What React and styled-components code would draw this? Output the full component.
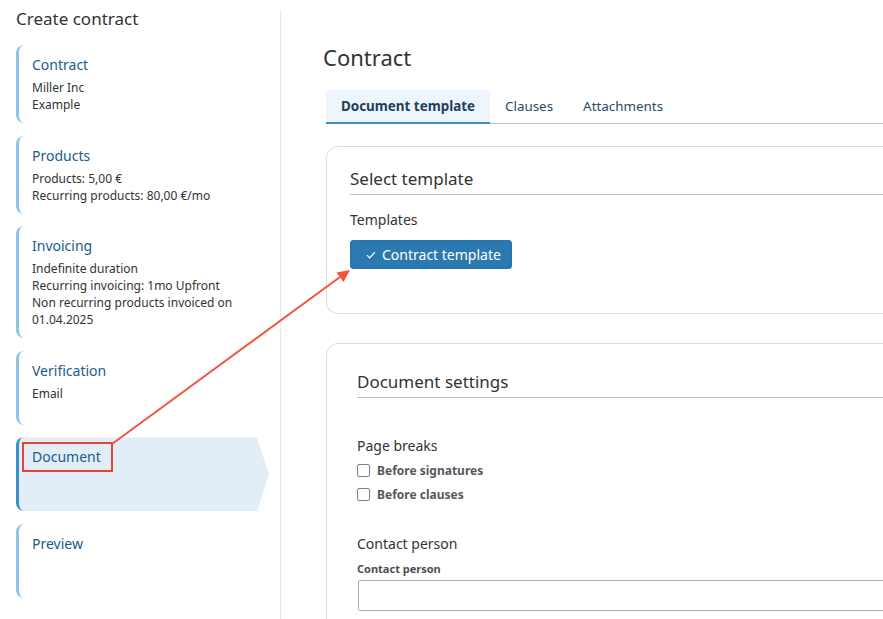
import styled, { createGlobalStyle } from 'styled-components'

const GlobalStyle = createGlobalStyle`
  html, body {
    margin: 0;
    padding: 0;
    background: #ffffff;
  }
  body {
    font-family: "Noto Sans", "Open Sans", sans-serif;
    color: #333333;
  }
`;

const Page = styled.div`
  position: relative;
  width: 883px;
  height: 619px;
  overflow: hidden;
  display: flex;
  padding-top: 10px;
  box-sizing: border-box;
`;

const Sidebar = styled.aside`
  width: 281px;
  flex-shrink: 0;
  box-sizing: border-box;
  padding: 0 11px 0 16px;
  border-right: 1px solid #e6e8ea;
`;

const SidebarTitle = styled.h1`
  margin: 1px 0 18px;
  font-size: 17px;
  line-height: 16px;
  font-weight: 400;
  color: #333333;
`;

const StepList = styled.div`
  display: flex;
  flex-direction: column;
  gap: 12.6px;
`;

const Step = styled.div`
  min-height: 74px;
  box-sizing: border-box;
  padding: 10px 16px 10px 13px;
  border-left: 3px solid ${(p) => (p.active ? '#3d8fc8' : '#90c4e4')};
  border-radius: 8px 6px 6px 8px;
  background: ${(p) => (p.active ? '#e1edf7' : 'transparent')};
  clip-path: ${(p) =>
    p.active
      ? 'polygon(0 0, calc(100% - 12px) 0, 100% 50%, calc(100% - 12px) 100%, 0 100%)'
      : 'none'};
`;

const StepTitle = styled.div`
  font-size: 14px;
  line-height: 20px;
  color: #205c8c;
  margin-bottom: 4px;
`;

const StepLine = styled.div`
  font-size: 12px;
  line-height: 17px;
  color: #333333;
`;

const Main = styled.main`
  flex-shrink: 0;
  width: 640px;
  padding: 33px 0 0 45px;
`;

const PageTitle = styled.h2`
  margin: 0 0 19px -3px;
  font-size: 22px;
  line-height: 28px;
  font-weight: 400;
  color: #333333;
`;

const Tabs = styled.div`
  display: flex;
  border-bottom: 1px solid #bcc1c6;
  margin-bottom: 22px;
`;

const Tab = styled.div`
  height: 34px;
  box-sizing: border-box;
  display: flex;
  align-items: center;
  padding: 0 15px;
  font-size: 13.4px;
  font-weight: ${(p) => (p.active ? 700 : 400)};
  color: ${(p) => (p.active ? '#1d3f5e' : '#2b4a66')};
  background: ${(p) => (p.active ? '#eef5fc' : 'transparent')};
  border-bottom: 2px solid ${(p) => (p.active ? '#3d8cc4' : 'transparent')};
  margin-bottom: -1px;
`;

const Card = styled.section`
  border: 1px solid #d9dcdf;
  border-radius: 12px;
  padding: ${(p) => p.pad};
  margin-bottom: 29px;
`;

const CardHeading = styled.h3`
  margin: 0;
  font-size: 17px;
  line-height: 24px;
  font-weight: 400;
  color: #333333;
  padding-bottom: 3px;
  border-bottom: 1px solid #b9c0c7;
`;

const FieldTitle = styled.div`
  font-size: 14px;
  line-height: 20px;
  color: #333333;
  margin-top: ${(p) => p.top}px;
`;

const TemplateButton = styled.button`
  margin-top: 10px;
  height: 29px;
  display: inline-flex;
  align-items: center;
  gap: 6px;
  padding: 0 10px 0 15px;
  border: 1px solid #2a73a8;
  border-radius: 3px;
  background: #2b79b0;
  color: #ffffff;
  font-family: inherit;
  font-size: 14px;
`;

const CheckList = styled.div`
  margin-top: 5px;
  display: flex;
  flex-direction: column;
  gap: 6px;
`;

const CheckRow = styled.label`
  display: flex;
  align-items: center;
  gap: 7px;
  height: 18px;
  font-size: 12px;
  font-weight: 700;
  color: #555a60;
`;

const Box = styled.input`
  appearance: none;
  margin: 0;
  width: 13px;
  height: 13px;
  border: 1px solid #7d8286;
  border-radius: 2px;
  background: #ffffff;
`;

const SmallLabel = styled.div`
  margin-top: 7px;
  font-size: 11px;
  line-height: 16px;
  font-weight: 700;
  color: #4a4f55;
`;

const TextInput = styled.input`
  display: block;
  margin: 3px 0 0 1px;
  width: 100%;
  height: 31px;
  box-sizing: border-box;
  border: 1px solid #a9aeb3;
  border-radius: 2px;
`;

const Overlay = styled.svg`
  position: absolute;
  left: 0;
  top: 0;
  pointer-events: none;
`;

const steps = [
  { title: 'Contract', lines: ['Miller Inc', 'Example'] },
  { title: 'Products', lines: ['Products: 5,00 €', 'Recurring products: 80,00 €/mo'] },
  {
    title: 'Invoicing',
    lines: [
      'Indefinite duration',
      'Recurring invoicing: 1mo Upfront',
      'Non recurring products invoiced on',
      '01.04.2025',
    ],
  },
  { title: 'Verification', lines: ['Email'] },
  { title: 'Document', lines: [], active: true },
  { title: 'Preview', lines: [] },
];

const App = () => {
  return (
    <Page>
      <GlobalStyle />
      <Sidebar>
        <SidebarTitle>Create contract</SidebarTitle>
        <StepList>
          {steps.map((s) => (
            <Step key={s.title} active={s.active}>
              <StepTitle>{s.title}</StepTitle>
              {s.lines.map((l) => (
                <StepLine key={l}>{l}</StepLine>
              ))}
            </Step>
          ))}
        </StepList>
      </Sidebar>
      <Main>
        <PageTitle>Contract</PageTitle>
        <Tabs>
          <Tab active>Document template</Tab>
          <Tab>Clauses</Tab>
          <Tab>Attachments</Tab>
        </Tabs>
        <Card pad="20px 0 44px 23px">
          <CardHeading>Select template</CardHeading>
          <FieldTitle top={15}>Templates</FieldTitle>
          <TemplateButton>
            <svg width="10" height="8" viewBox="0 0 10 8" fill="none">
              <path d="M1 4.2L3.6 6.8L9 1.2" stroke="#ffffff" strokeWidth="1.2" />
            </svg>
            Contract template
          </TemplateButton>
        </Card>
        <Card pad="26px 0 20px 30px">
          <CardHeading>Document settings</CardHeading>
          <FieldTitle top={38}>Page breaks</FieldTitle>
          <CheckList>
            <CheckRow>
              <Box type="checkbox" />
              Before signatures
            </CheckRow>
            <CheckRow>
              <Box type="checkbox" />
              Before clauses
            </CheckRow>
          </CheckList>
          <FieldTitle top={31}>Contact person</FieldTitle>
          <SmallLabel>Contact person</SmallLabel>
          <TextInput type="text" />
        </Card>
      </Main>
      <Overlay width="883" height="619" viewBox="0 0 883 619">
        <rect x="23" y="443" width="89" height="28" fill="none" stroke="#ea4330" strokeWidth="2" />
        <line x1="112" y1="444" x2="340" y2="277" stroke="#f0563c" strokeWidth="2" />
        <path d="M350 270 L336.5 272.5 L343.5 282 Z" fill="#f0563c" />
      </Overlay>
    </Page>
  )
}

export default App
